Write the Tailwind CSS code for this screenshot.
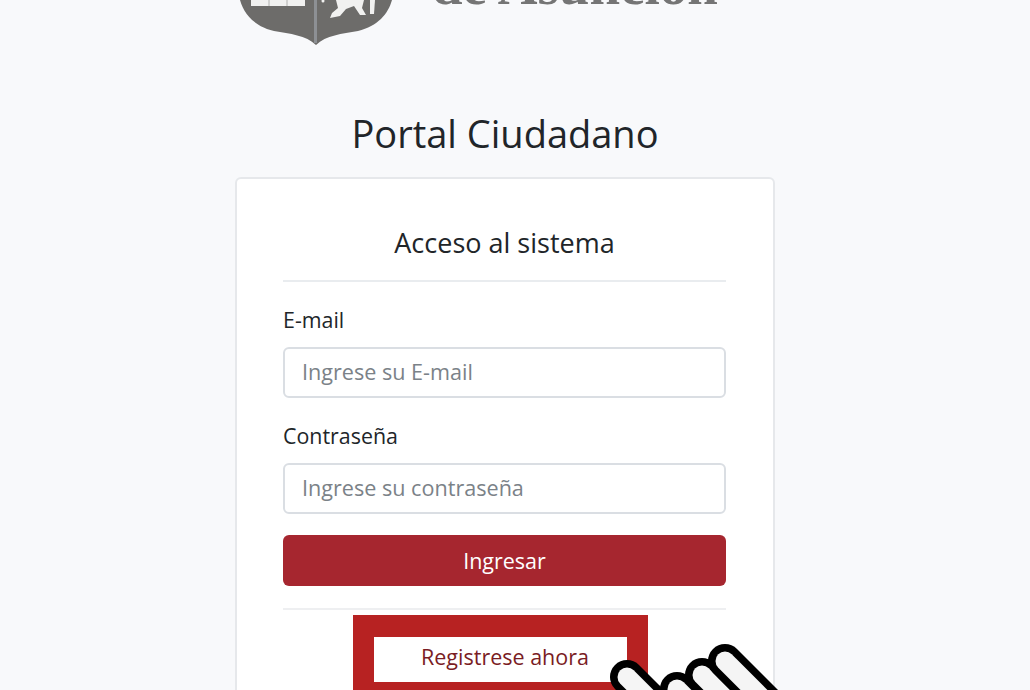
<!DOCTYPE html>
<html lang="es">
<head>
    <meta charset="UTF-8">
    <meta name="viewport" content="width=device-width, initial-scale=1.0">
    <title>Portal Ciudadano</title>
    <script src="https://cdn.jsdelivr.net/npm/@tailwindcss/browser@4"></script>
</head>
<body class="bg-[#f8f9fb] font-['Open_Sans',sans-serif] text-[#212529]">
<main class="relative h-[690px] overflow-hidden flex flex-col items-center pr-[20px]">

    <!-- logo, cut off by the top of the page -->
    <header class="w-[540px] h-[46px] pl-[5px] flex gap-[40px] overflow-hidden shrink-0">
        <svg class="shrink-0 blur-[0.7px]" width="152" height="46" viewBox="0 0 152 46">
            <path d="M0 0 C4 14 14 26 34 31 C50 34 66 35 76 45 C86 35 102 34 118 31 C138 26 148 14 152 0 Z" fill="#6d6c6a"/>
            <rect x="74" y="0" width="3" height="43" fill="#8d9094"/>
            <path d="M11 0 H65 V6 H11 Z" fill="#f1f1f0"/>
            <path d="M29 0 V6 M47 0 V6" stroke="#b0b0ae" stroke-width="1"/>
            <path d="M96 0 H124 L122 8 L126 15 H120 L114 6 L106 9 L100 16 L90 18 L92 13 L98 8 Z" fill="#f1f1f0"/>
            <path d="M130 0 H135 L134 14 H130 Z" fill="#f1f1f0"/>
            <circle cx="83" cy="1" r="1.5" fill="#f1f1f0"/>
        </svg>
        <div class="font-['Liberation_Serif',serif] font-bold text-[55px] leading-[55px] mt-[-42px] h-[55px] text-[#757575] whitespace-nowrap blur-[0.7px]">de Asunción</div>
    </header>

    <h1 class="mt-[62px] text-[38px] leading-[50px] text-center">Portal Ciudadano</h1>

    <section class="mt-[19px] w-[540px] flex-1 bg-white border-2 border-[#e6e8eb] rounded-md pl-[46px] pr-[47px] pt-[45px]">
        <h2 class="text-[27px] leading-[38px] text-center pb-[18px] border-b-2 border-[#e9ecef]">Acceso al sistema</h2>

        <form>
            <label for="email" class="block mt-[22px] text-[21.4px] leading-[32px]">E-mail</label>
            <input id="email" type="email" placeholder="Ingrese su E-mail"
                class="block w-full h-[51px] mt-[11px] px-[17px] pb-[2px] text-[21.6px] border-2 border-[#dadee3] rounded-md bg-white placeholder:text-[#7b8288]">

            <label for="password" class="block mt-[22px] text-[21.4px] leading-[32px]">Contraseña</label>
            <input id="password" type="password" placeholder="Ingrese su contraseña"
                class="block w-full h-[51px] mt-[11px] px-[17px] pb-[2px] text-[21.6px] border-2 border-[#dadee3] rounded-md bg-white placeholder:text-[#7b8288]">

            <button type="button" class="block w-full h-[51px] mt-[21px] pt-[2px] bg-[#a6262f] text-white text-[21.5px] rounded-md">Ingresar</button>
        </form>

        <div class="mt-[22px] border-t-2 border-[#eeeff1] flex justify-center pt-[5px] pr-[8px]">
            <div class="w-[295px] h-[80px] bg-[#b72222] pt-[22px] px-[21px]">
                <a href="#" class="block h-[45px] pl-[9px] bg-white text-[#7a1c24] text-[21.5px] leading-[39px] text-center">Registrese ahora</a>
            </div>
        </div>
    </section>

    <!-- pointing hand, over the register button -->
    <svg class="absolute left-[600px] top-[640px]" width="200" height="50" viewBox="600 640 200 50" fill="none" stroke-linecap="round">
        <g stroke-width="34">
            <path d="M627 677 L690 740" stroke="#000"/>
            <path d="M627 677 L690 740" stroke="#f5f5f5" stroke-width="19"/>
            <path d="M677 689 L720 732" stroke="#000"/>
            <path d="M677 689 L720 732" stroke="#f5f5f5" stroke-width="19"/>
            <path d="M702 675 L750 723" stroke="#000"/>
            <path d="M702 675 L750 723" stroke="#f5f5f5" stroke-width="19"/>
            <path d="M725 661 L790 726" stroke="#000"/>
            <path d="M725 661 L790 726" stroke="#f5f5f5" stroke-width="19"/>
        </g>
    </svg>
</main>
</body>
</html>
